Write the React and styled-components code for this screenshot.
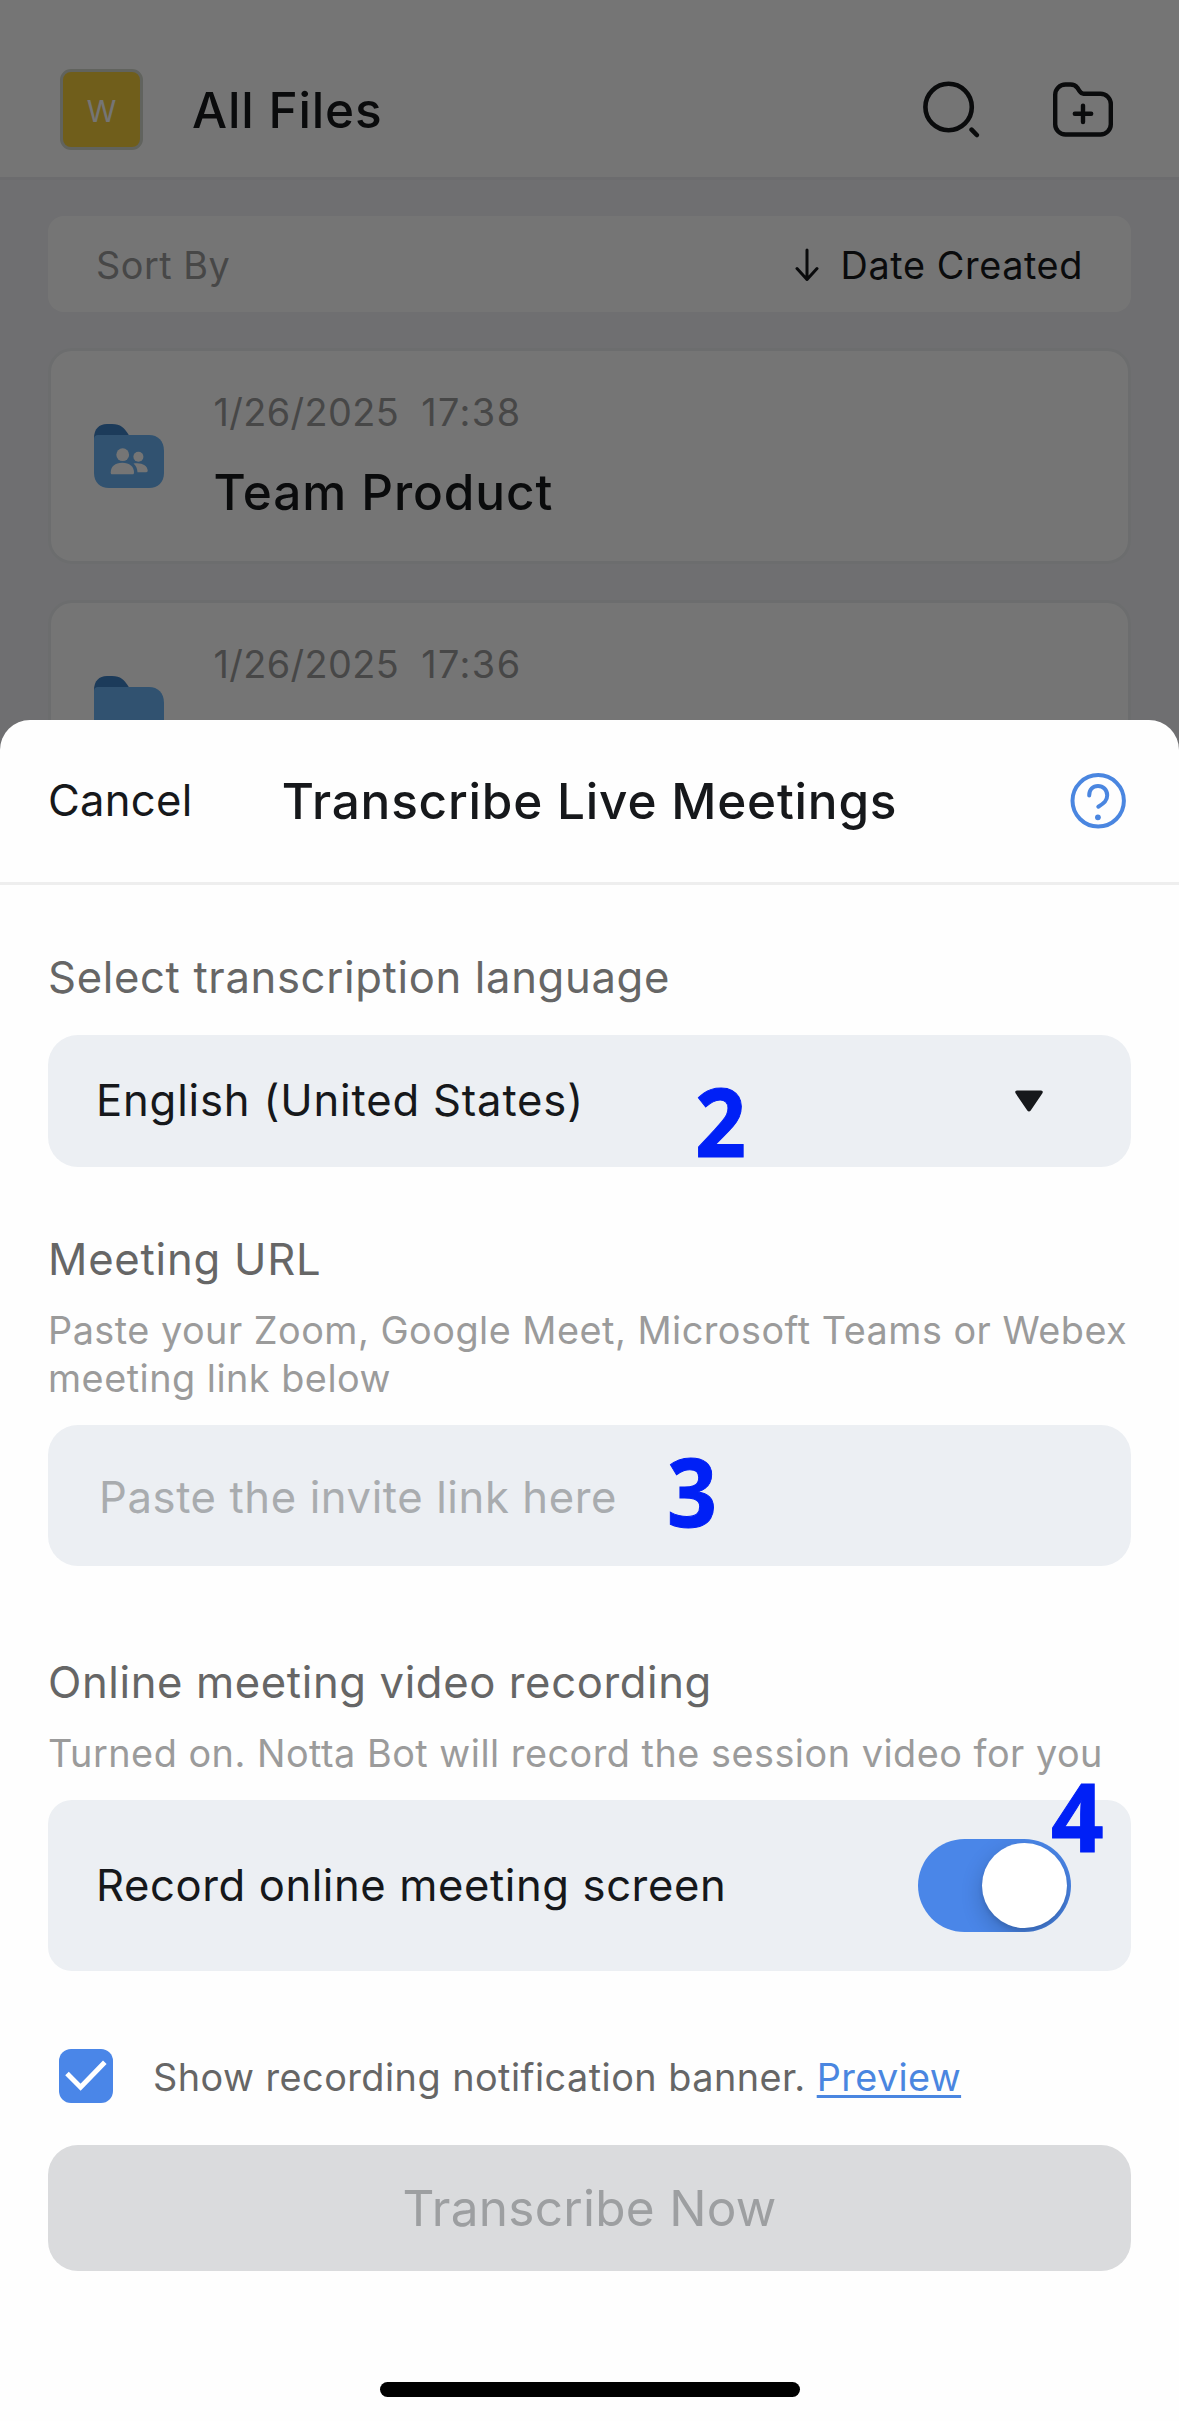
import React from 'react';
import styled, { createGlobalStyle } from 'styled-components';

const GlobalStyle = createGlobalStyle`
  * { box-sizing: border-box; }
  body { margin: 0; background: #fff; font-family: Inter, "Liberation Sans", sans-serif; }
`;

const sizes = {
  small: { font: '37.8px', line: '48px' },
  medium: { font: '43.6px', line: '54px' },
  large: { font: '49.5px', line: '60px' },
};

const Text = styled.span`
  display: block;
  white-space: nowrap;
  font-size: ${(p) => sizes[p.$size].font};
  line-height: ${(p) => sizes[p.$size].line};
  font-weight: ${(p) => p.$weight || 400};
  letter-spacing: ${(p) => p.$spacing || 0}px;
  color: ${(p) => p.$color || '#16181b'};
`;

const Screen = styled.div`
  position: relative;
  width: 1179px;
  height: 2421px;
  overflow: hidden;
  background: #f2f2f6;
`;

/* File list behind the sheet */
const TopBar = styled.header`
  display: flex;
  align-items: flex-start;
  height: 180px;
  padding: 69px 63px 0 60px;
  background: #fff;
  border-bottom: 3px solid #ececf0;
`;

const WorkspaceBadge = styled.div`
  display: flex;
  align-items: center;
  justify-content: center;
  width: 83px;
  height: 81px;
  margin-right: 49px;
  padding-top: 3px;
  border: 3px solid #d3d8cc;
  border-radius: 11px;
  background: #f5cc3c;
  color: #fff;
  font-size: 30px;
  font-weight: 400;
`;

const PageTitle = styled(Text)`
  flex: 1;
  line-height: 82px;
`;

const TopActions = styled.div`
  display: flex;
  gap: 70px;
  svg { display: block; }
`;

const FileList = styled.main`
  display: flex;
  flex-direction: column;
  gap: 36px;
  padding: 36px 48px 0;
`;

const SortBar = styled.div`
  display: flex;
  align-items: center;
  justify-content: space-between;
  height: 96px;
  padding: 2px 48px 0;
  border-radius: 16px;
  background: #fff;
`;

const SortValue = styled.div`
  display: flex;
  align-items: center;
  gap: 19px;
`;

const FileCard = styled.article`
  display: flex;
  align-items: flex-start;
  height: 216px;
  padding-left: 43px;
  border: 3px solid #ebeef0;
  border-radius: 24px;
  background: #fff;
`;

const FolderGlyph = styled.svg`
  display: block;
  margin: 73px 49.5px 0 0;
`;

const FileInfo = styled.div`
  display: flex;
  flex-direction: column;
  gap: 26px;
  padding-top: 37px;
`;

const FileDate = styled.div`
  display: flex;
  gap: 22px;
`;

/* Bottom sheet */
const Scrim = styled.div`
  position: absolute;
  inset: 0;
  display: flex;
  flex-direction: column;
  padding-top: 720px;
  background: rgba(0, 0, 0, 0.54);
`;

const Sheet = styled.section`
  display: flex;
  flex-direction: column;
  flex: 1;
  border-radius: 30px 30px 0 0;
  background: #fefefe;
`;

const SheetHeader = styled.div`
  display: grid;
  grid-template-columns: 1fr auto 1fr;
  align-items: center;
  height: 165px;
  padding: 0 48px;
  border-bottom: 3px solid #eeeeee;
  svg { display: block; justify-self: end; }
`;

const Form = styled.div`
  display: flex;
  flex-direction: column;
  flex: 1;
  padding: 66px 48px 0;
`;

const Section = styled.div`
  display: flex;
  flex-direction: column;
  margin-bottom: ${(p) => p.$after}px;
`;

const Hint = styled(Text)`
  margin-top: 19px;
  white-space: normal;
`;

const Field = styled.div`
  position: relative;
  display: flex;
  align-items: center;
  justify-content: space-between;
  height: ${(p) => p.$height}px;
  margin-top: ${(p) => p.$gap}px;
  padding: ${(p) => p.$padding};
  border-radius: ${(p) => p.$radius || 30}px;
  background: #eceff3;
`;

const StepNumber = styled.span`
  position: absolute;
  left: ${(p) => p.$left}px;
  top: ${(p) => p.$top}px;
  transform: scaleX(${(p) => p.$stretch});
  transform-origin: left;
  color: #0020f6;
  font: 700 94.5px/1 "Open Sans", sans-serif;
  -webkit-text-stroke: 1px #0020f6;
`;

const Switch = styled.div`
  display: flex;
  justify-content: flex-end;
  width: 153px;
  height: 93px;
  padding: 4px;
  overflow: hidden;
  border-radius: 47px;
  background: #4a86e8;
`;

const Knob = styled.div`
  width: 85px;
  height: 85px;
  border-radius: 50%;
  background: #fff;
  box-shadow: 0 8px 22px rgba(0, 0, 0, 0.2), 0 3px 4px rgba(0, 0, 0, 0.1);
`;

const ConsentRow = styled.div`
  display: flex;
  align-items: center;
  height: 54px;
  margin: 0 0 42px 10.5px;
`;

const Checkbox = styled.div`
  width: 54.5px;
  height: 54px;
  margin-right: 40px;
  border-radius: 12px;
  background: #4a86e8;
  svg { display: block; }
`;

const ConsentText = styled(Text)`
  padding-top: 2px;
`;

const PreviewLink = styled(ConsentText)`
  margin-left: 11px;
  text-decoration: underline;
  text-decoration-thickness: 2.6px;
  text-underline-offset: 4px;
  text-decoration-skip-ink: none;
`;

const SubmitButton = styled.div`
  display: flex;
  align-items: center;
  justify-content: center;
  height: 126px;
  border-radius: 30px;
  background: #dadbdd;
`;

const HomeIndicator = styled.div`
  align-self: center;
  width: 420px;
  height: 15px;
  margin-bottom: 24px;
  border-radius: 8px;
  background: #000;
`;

const INK = '#16181b';
const BLUE = '#4a86e0';

function SearchIcon() {
  return (
    <svg width="62" height="81" viewBox="0 0 62 81" fill="none" stroke={INK} strokeWidth="4.6" strokeLinecap="round">
      <circle cx="30.6" cy="38" r="23.2" />
      <path d="M53.6 60.7 58.8 66" />
    </svg>
  );
}

function NewFolderIcon() {
  return (
    <svg width="66" height="81" viewBox="0 0 66 81" fill="none" stroke={INK} strokeWidth="4.4" strokeLinecap="round" strokeLinejoin="round">
      <path d="M15.5 15.5H20.5c3 0 5.2 1.1 6.9 3.3l2.1 3.3c1.3 1.9 2 2.6 4 2.6H50.5a10.3 10.3 0 0 1 10.3 10.3V55.2a10.3 10.3 0 0 1-10.3 10.3H15.5A10.3 10.3 0 0 1 5.2 55.2V25.8A10.3 10.3 0 0 1 15.5 15.5Z" />
      <path d="M33 36.6v16.4M24.8 44.8h16.4" />
    </svg>
  );
}

function ArrowDownIcon() {
  return (
    <svg width="30" height="36" viewBox="0 0 30 36" fill="none" stroke={INK} strokeWidth="3" strokeLinecap="round" strokeLinejoin="round">
      <path d="M15 3V32.500M5 21.500 15 32.500 25 21.500" />
    </svg>
  );
}

function FolderIcon({ shared }) {
  return (
    <FolderGlyph width="70" height="64" viewBox="0 0 70 64">
      <path d="M0 22V14C0 5 5 0 13 0H18C27 0 30 4 33.500 9L38 16Z" fill="#3e80c4" />
      <path d="M0 15C0 12.500 1.500 11 4 11H55C64 11 70 17 70 27V49C70 58 64 64 55 64H15C6 64 0 58 0 49Z" fill="#6bb4f4" />
      {shared && (
        <g fill="#fff">
          <circle cx="28.700" cy="30.700" r="6.400" />
          <path d="M16.700 48.500C16.700 42.500 21 38.700 28.300 38.700S40 42.500 40 48.500C40 49.800 39.500 50.300 38.300 50.300H18.400C17.200 50.300 16.700 49.800 16.700 48.500Z" />
          <circle cx="44.400" cy="32.800" r="5" />
          <path d="M39.500 39.600C47.500 38.200 53.400 41.600 53.700 46.500C53.700 47.700 53.200 48.200 52.200 48.200H43.500C43.300 44.500 42 41.600 39.500 39.600Z" />
        </g>
      )}
    </FolderGlyph>
  );
}

function HelpIcon() {
  return (
    <svg width="66" height="60" viewBox="0 0 66 60" fill="none" stroke={BLUE} strokeWidth="4" strokeLinecap="round" strokeLinejoin="round">
      <circle cx="33.200" cy="29.800" r="25.700" />
      <path d="M24.200 24.500C24.200 18.500 28 15 33 15S42.200 18.700 42.200 24.300C42.200 29.800 39 32.200 33.300 35.700" />
      <circle cx="32.900" cy="46.300" r="2.900" fill={BLUE} stroke="none" />
    </svg>
  );
}

function CaretIcon() {
  return (
    <svg width="28" height="22" viewBox="0 0 28 22" fill={INK}>
      <path d="M2 0.500H26C27.600 0.500 28.300 2 27.400 3.300L15.700 20.400C14.800 21.700 13.200 21.700 12.300 20.400L0.600 3.300C-0.300 2 0.400 0.500 2 0.500Z" />
    </svg>
  );
}

function CheckIcon() {
  return (
    <svg width="54" height="54" viewBox="0 0 54 54" fill="none" stroke="#fff" strokeWidth="5">
      <path d="M8 24.600 21.600 38.300 45.800 13.300" />
    </svg>
  );
}

function FileRow({ date, time, name, shared }) {
  return (
    <FileCard>
      <FolderIcon shared={shared} />
      <FileInfo>
        <FileDate>
          <Text $size="small" $spacing={0.4} $color="#9b9b9b">{date}</Text>
          <Text $size="small" $spacing={1.44} $color="#9b9b9b">{time}</Text>
        </FileDate>
        {name && <Text $size="large" $weight={500} $spacing={0.9}>{name}</Text>}
      </FileInfo>
    </FileCard>
  );
}

export default function App() {
  return (
    <Screen>
      <GlobalStyle />
      <TopBar>
        <WorkspaceBadge>W</WorkspaceBadge>
        <PageTitle $size="large" $weight={500} $spacing={0.82}>All Files</PageTitle>
        <TopActions>
          <SearchIcon />
          <NewFolderIcon />
        </TopActions>
      </TopBar>
      <FileList>
        <SortBar>
          <Text $size="small" $spacing={0.52} $color="#9b9b9b">Sort By</Text>
          <SortValue>
            <ArrowDownIcon />
            <Text $size="small" $spacing={0.6}>Date Created</Text>
          </SortValue>
        </SortBar>
        <FileRow date="1/26/2025" time="17:38" name="Team Product" shared />
        <FileRow date="1/26/2025" time="17:36" />
      </FileList>

      <Scrim>
        <Sheet>
          <SheetHeader>
            <Text $size="medium" $spacing={0.26}>Cancel</Text>
            <Text $size="large" $weight={500} $spacing={0.79}>Transcribe Live Meetings</Text>
            <HelpIcon />
          </SheetHeader>
          <Form>
            <Section $after={66}>
              <Text $size="medium" $spacing={0.66} $color="#666">Select transcription language</Text>
              <Field $height={132} $gap={30} $padding="0 88px 0 48px">
                <Text $size="medium" $spacing={0.83}>English (United States)</Text>
                <CaretIcon />
                <StepNumber $left={647} $top={38.5} $stretch={0.945}>2</StepNumber>
              </Field>
            </Section>

            <Section $after={90}>
              <Text $size="medium" $spacing={0.77} $color="#666">Meeting URL</Text>
              <Hint $size="small" $spacing={0.49} $color="#9b9b9b">
                Paste your Zoom, Google Meet, Microsoft Teams or Webex meeting link below
              </Hint>
              <Field $height={141} $gap={23} $padding="4px 51px 0">
                <Text $size="medium" $spacing={0.61} $color="#a9acaf">Paste the invite link here</Text>
                <StepNumber $left={619} $top={18.5} $stretch={0.925}>3</StepNumber>
              </Field>
            </Section>

            <Section $after={78}>
              <Text $size="medium" $spacing={0.62} $color="#666">Online meeting video recording</Text>
              <Hint $size="small" $spacing={0.5} $color="#9b9b9b">
                Turned on. Notta Bot will record the session video for you
              </Hint>
              <Field $height={171} $gap={23} $radius={24} $padding="0 60px 0 48px">
                <Text $size="medium" $spacing={0.59}>Record online meeting screen</Text>
                <Switch>
                  <Knob />
                </Switch>
                <StepNumber $left={1003} $top={-31.5} $stretch={0.975}>4</StepNumber>
              </Field>
            </Section>

            <ConsentRow>
              <Checkbox>
                <CheckIcon />
              </Checkbox>
              <ConsentText $size="small" $spacing={0.47} $color="#666">Show recording notification banner.</ConsentText>
              <PreviewLink $size="small" $spacing={0.38} $color={BLUE}>Preview</PreviewLink>
            </ConsentRow>
            <SubmitButton>
              <Text $size="large" $spacing={0.27} $color="#9d9fa1">Transcribe Now</Text>
            </SubmitButton>
          </Form>
          <HomeIndicator />
        </Sheet>
      </Scrim>
    </Screen>
  );
}
